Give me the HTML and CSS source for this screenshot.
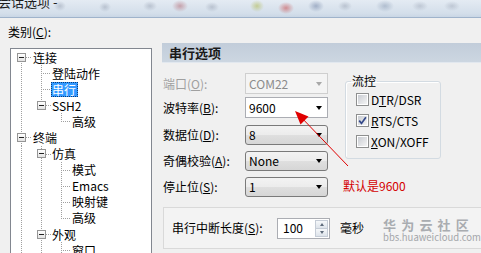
FILE: index.html
```html
<!DOCTYPE html>
<html lang="zh-CN">
<head>
<meta charset="utf-8">
<title>会话选项</title>
<link rel="stylesheet" href="styles.css">
</head>
<body>
<div class="titlebar"><span class="title">会话选项 -</span></div>
<div class="dialog">
  <div class="left">
    <div class="cat-label">类别(<u>C</u>):</div>
    <div class="tree">
      <div class="node"><span class="c xb"><span class="box"></span></span><span class="lbl root">连接</span></div>
      <div class="node"><span class="c g"></span><span class="c t"></span><span class="lbl">登陆动作</span></div>
      <div class="node"><span class="c g"></span><span class="c t"></span><span class="lbl sel">串行</span></div>
      <div class="node"><span class="c g"></span><span class="c xt"><span class="box"></span></span><span class="lbl">SSH2</span></div>
      <div class="node"><span class="c g"></span><span class="c"></span><span class="c l"></span><span class="lbl">高级</span></div>
      <div class="node"><span class="c xa"><span class="box"></span></span><span class="lbl root">终端</span></div>
      <div class="node"><span class="c g"></span><span class="c xa"><span class="box"></span></span><span class="lbl">仿真</span></div>
      <div class="node"><span class="c g"></span><span class="c g"></span><span class="c t"></span><span class="lbl">模式</span></div>
      <div class="node"><span class="c g"></span><span class="c g"></span><span class="c t"></span><span class="lbl">Emacs</span></div>
      <div class="node"><span class="c g"></span><span class="c g"></span><span class="c t"></span><span class="lbl">映射键</span></div>
      <div class="node"><span class="c g"></span><span class="c g"></span><span class="c l"></span><span class="lbl">高级</span></div>
      <div class="node"><span class="c g"></span><span class="c xa"><span class="box"></span></span><span class="lbl">外观</span></div>
      <div class="node"><span class="c g"></span><span class="c g"></span><span class="c t"></span><span class="lbl">窗口</span></div>
    </div>
  </div>
  <div class="right">
    <div class="header">串行选项</div>
    <div class="form">
      <div class="fields">
        <div class="row edit"><span class="flabel disabled">端口(<u>O</u>):</span><div class="combo edit off"><span>COM22</span><span class="arrow"></span></div></div>
        <div class="row edit"><span class="flabel">波特率(<u>B</u>):</span><div class="combo edit"><span>9600</span><span class="arrow"></span></div></div>
        <div class="row list"><span class="flabel">数据位(<u>D</u>):</span><div class="combo list"><span>8</span><span class="arrow"></span></div></div>
        <div class="row list"><span class="flabel">奇偶校验(<u>A</u>):</span><div class="combo list"><span>None</span><span class="arrow"></span></div></div>
        <div class="row list"><span class="flabel">停止位(<u>S</u>):</span><div class="combo list"><span>1</span><span class="arrow"></span></div></div>
      </div>
      <div class="side">
        <fieldset class="group">
          <legend>流控</legend>
          <div class="check"><span class="cb"></span><span>D<u>T</u>R/DSR</span></div>
          <div class="check"><span class="cb on"><svg width="9" height="9" viewBox="0 0 9 9"><path d="M1.2 4.6 L3.5 7.4 L7.9 1.2" fill="none" stroke="#34488a" stroke-width="1.7"/></svg></span><span><u>R</u>TS/CTS</span></div>
          <div class="check"><span class="cb"></span><span><u>X</u>ON/XOFF</span></div>
        </fieldset>
        <div class="note">默认是9600</div>
      </div>
    </div>
    <div class="panel">
      <span class="plabel">串行中断长度(<u>S</u>):</span>
      <div class="spin"><span>100</span><span class="spin-btns"><span class="sb"><span class="tri-up"></span></span><span class="sb"><span class="tri-dn"></span></span></span></div>
      <span class="unit">毫秒</span>
      <div class="wm">
        <div class="wm-cn">华为云社区</div>
        <div class="wm-en">bbs.huaweicloud.com</div>
      </div>
    </div>
  </div>
</div>
<svg class="annot" width="70" height="70" viewBox="0 0 70 70">
  <line x1="58" y1="61" x2="9" y2="10" stroke="#e00000" stroke-width="1"/>
  <polygon points="5,6 18.5,11.5 10.5,19.5" fill="#e00000"/>
</svg>
</body>
</html>
```
FILE: styles.css
```css
* { box-sizing: border-box; }
html, body { margin: 0; padding: 0; }
body {
  width: 481px;
  height: 253px;
  overflow: hidden;
  background: #f0f0f0;
  font-family: "Noto Sans CJK SC", "Liberation Sans", sans-serif;
  font-size: 12px;
  color: #000;
  --vd: repeating-linear-gradient(to bottom, #a0a0a0 0 1px, transparent 1px 2px);
  --hd: repeating-linear-gradient(to right, #a0a0a0 0 1px, transparent 1px 2px);
}
u { text-decoration: underline; text-underline-offset: 1px; }

.titlebar {
  height: 18px;
  overflow: hidden;
  border-bottom: 1px solid #9fb3cb;
  background:
    radial-gradient(6px 5px at 60px 6px, rgba(120,130,150,.35), transparent),
    radial-gradient(6px 5px at 105px 7px, rgba(120,130,150,.35), transparent),
    radial-gradient(7px 5px at 150px 6px, rgba(120,130,150,.35), transparent),
    radial-gradient(8px 6px at 180px 6px, rgba(170,80,90,.45), transparent),
    radial-gradient(7px 5px at 212px 7px, rgba(120,130,150,.35), transparent),
    radial-gradient(7px 6px at 257px 6px, rgba(170,180,60,.5), transparent),
    radial-gradient(8px 6px at 286px 8px, rgba(200,70,70,.55), transparent),
    radial-gradient(8px 6px at 316px 6px, rgba(90,110,150,.45), transparent),
    radial-gradient(7px 5px at 345px 6px, rgba(120,130,150,.35), transparent),
    radial-gradient(9px 6px at 385px 6px, rgba(110,130,160,.4), transparent),
    radial-gradient(8px 5px at 420px 6px, rgba(120,130,150,.3), transparent),
    radial-gradient(8px 5px at 452px 6px, rgba(120,130,150,.3), transparent),
    linear-gradient(#e4ebf3, #d3deea 80%, #c9d6e5);
}
.title {
  display: block;
  font-size: 13px;
  line-height: 14px;
  margin: -5px 0 0 -2px;
  color: #1c1c1c;
  white-space: nowrap;
}

.dialog { display: flex; height: 235px; overflow: hidden; }

.left { width: 152px; flex: none; padding-left: 8px; }
.cat-label { margin-top: 7px; line-height: 14px; }
.tree {
  margin: 9px 0 0 2px;
  width: 142px;
  height: 206px;
  background: #fff;
  border: 1px solid #828790;
  border-bottom: none;
  overflow: hidden;
}
.node { display: flex; align-items: center; height: 16.1px; }
.c { width: 20px; height: 100%; flex: none; display: flex; align-items: center; }
.c.g { background: var(--vd) 10px 0 / 1px 100% no-repeat; }
.c.t { background: var(--hd) 10px 8px / 10px 1px no-repeat, var(--vd) 10px 0 / 1px 100% no-repeat; }
.c.l { background: var(--hd) 10px 8px / 10px 1px no-repeat, var(--vd) 10px 0 / 1px 9px no-repeat; }
.c.xb { background: var(--hd) 15px 8px / 5px 1px no-repeat, var(--vd) 10px 8px / 1px 100% no-repeat; }
.c.xt { background: var(--hd) 15px 8px / 5px 1px no-repeat, var(--vd) 10px 0 / 1px 8px no-repeat; }
.c.xa { background: var(--hd) 15px 8px / 5px 1px no-repeat, var(--vd) 10px 0 / 1px 100% no-repeat; }
.box {
  width: 9px;
  height: 9px;
  margin: 0 0 0 6px;
  border: 1px solid #959595;
  background:
    linear-gradient(#222, #222) center / 5px 1px no-repeat,
    linear-gradient(#ffffff, #e3e3e3);
}
.lbl { padding: 0 2px 0 1px; line-height: 15px; white-space: nowrap; }
.lbl.root { margin-left: 1px; }
.lbl.sel {
  background: #3399ff;
  color: #fff;
  outline: 1px dotted #0b3c78;
  outline-offset: -1px;
}

.right { flex: 1; min-width: 0; margin-left: 10px; }
.header {
  margin-top: 25px;
  height: 20px;
  line-height: 20px;
  padding-left: 7px;
  font-size: 13px;
  font-weight: bold;
  color: #1a1a1a;
  background: linear-gradient(#c2cdda, #ccd6e1);
  border-bottom: 1px solid #e2e8ef;
}
.form { display: flex; margin-top: 10px; padding-left: 1px; }
.fields { width: 166px; flex: none; }
.row { display: flex; align-items: center; height: 20px; }
.row.edit { height: 21px; }
.row + .row { margin-top: 6px; }
.row.edit + .row.edit { margin-top: 3px; }
.row.edit + .row.list { margin-top: 7px; }
.flabel { width: 82px; flex: none; line-height: 14px; white-space: nowrap; }
.flabel.disabled { color: #a0a0a0; }

.combo {
  width: 83px;
  height: 100%;
  display: flex;
  align-items: center;
  justify-content: space-between;
  padding: 0 5px 0 3px;
  line-height: 14px;
}
.combo.edit { border: 1px solid #abadb3; background: #fff; }
.combo.edit.off { border-color: #cfcfcf; background: #f4f4f4; color: #8c8c8c; }
.combo.list {
  border: 1px solid #7a7a7a;
  border-radius: 3px;
  background: linear-gradient(#f3f3f3 0, #ececec 50%, #dfdfdf 51%, #d6d6d6 100%);
}
.arrow {
  width: 0;
  height: 0;
  border-left: 3.5px solid transparent;
  border-right: 3.5px solid transparent;
  border-top: 4px solid #000;
}
.combo.off .arrow { border-top-color: #a8a8a8; }

.side { margin-left: 16px; }
.group {
  margin: 1px 0 0;
  width: 96px;
  padding: 1px 0 6px 10px;
  border: 1px solid #d3dbe2;
  border-radius: 3px;
  box-shadow: inset 1px 1px 0 #fff;
}
.group legend {
  padding: 0 1px;
  margin-left: -5px;
  line-height: 14px;
}
.check { display: flex; align-items: center; height: 21px; white-space: nowrap; }
.check > span:last-child { margin-left: 2px; line-height: 14px; }
.cb {
  width: 13px;
  height: 13px;
  flex: none;
  border: 1px solid #8e8f8f;
  padding: 1px;
  background: linear-gradient(135deg, #c9ccd2, #f4f4f4) content-box, #fff;
  display: flex;
  align-items: center;
  justify-content: center;
}
.note {
  margin: 20px 0 0 -2px;
  line-height: 14px;
  color: #d40000;
  white-space: nowrap;
}

.panel {
  margin: 10px 0 0 1px;
  height: 42px;
  display: flex;
  align-items: center;
  padding-left: 8px;
  background: #f3f3f3;
  border: 1px solid #d9d9d9;
  border-right: none;
  white-space: nowrap;
}
.plabel { width: 105px; flex: none; line-height: 14px; }
.spin {
  width: 53px;
  height: 21px;
  flex: none;
  border: 1px solid #abadb3;
  background: #fff;
  display: flex;
  align-items: center;
  justify-content: space-between;
  padding: 1px 1px 1px 5px;
  line-height: 14px;
}
.spin-btns { width: 13px; height: 100%; display: flex; flex-direction: column; }
.sb {
  flex: 1;
  display: flex;
  align-items: center;
  justify-content: center;
  border: 1px solid #c5ccd6;
  background: linear-gradient(#f6f8fa, #dde3ea);
}
.sb + .sb { border-top: none; }
.tri-up, .tri-dn { width: 0; height: 0; border-left: 2.5px solid transparent; border-right: 2.5px solid transparent; }
.tri-up { border-bottom: 3px solid #5d6a7a; }
.tri-dn { border-top: 3px solid #5d6a7a; }
.unit { margin-left: 10px; line-height: 14px; flex: none; }
.wm { margin: 3px 0 0 19px; color: #a3a6aa; flex: none; width: 92px; }
.wm-cn { font-size: 13px; line-height: 15px; letter-spacing: 5.2px; font-weight: bold; color: #a9acb0; }
.wm-en { font-size: 9.5px; line-height: 11px; }
.annot { position: absolute; left: 290px; top: 105px; }
```
